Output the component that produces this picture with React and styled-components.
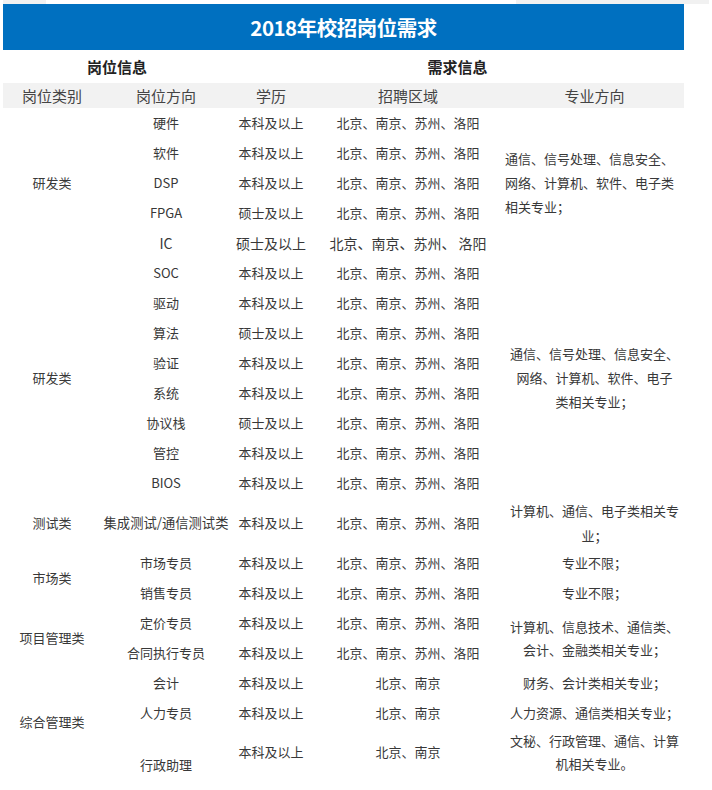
import React from 'react';
import styled, { createGlobalStyle } from 'styled-components';

const GlobalStyle = createGlobalStyle`
  body {
    margin: 0;
    background: #fff;
    font-family: "Noto Sans CJK SC", "Noto Sans", sans-serif;
  }
`;

const Page = styled.div`
  width: 712px;
  min-height: 790px;
  background: #fff;
`;

const TopStrip = styled.div`
  height: 4px;
  margin: 0 3px;
  background: linear-gradient(to right, #f1f1f1 43px, #fff 43px, #fff 513px, #f1f1f1 513px);
`;

const Banner = styled.div`
  margin-left: 3px;
  width: 681px;
  height: 46px;
  background: #0070c0;
  color: #fff;
  display: flex;
  align-items: center;
  justify-content: center;
  font-size: 20.5px;
  font-weight: 700;
  letter-spacing: -0.5px;
`;

const Table = styled.table`
  margin-left: 3px;
  width: 681px;
  table-layout: fixed;
  border-collapse: collapse;
  color: #383838;
`;

const Col = styled.col`
  width: ${p => p.$w}px;
`;

const GroupRow = styled.tr`
  height: 33px;
`;

const GroupCell = styled.td`
  padding: 0;
  text-align: center;
  font-size: 15px;
  font-weight: 700;
  color: #222;
`;

const HeadRow = styled.tr`
  height: 25px;
  background: #f2f2f2;
`;

const HeadCell = styled.th`
  padding: 0;
  font-size: 15px;
  font-weight: 400;
  color: #444;
  text-align: center;
`;

const Row = styled.tr`
  height: ${p => p.$h || 30}px;
`;

const Cell = styled.td`
  padding: 0;
  text-align: ${p => p.$left ? 'left' : 'center'};
  vertical-align: ${p => p.$bottom ? 'bottom' : 'middle'};
  font-size: ${p => p.$size || 13}px;
  line-height: ${p => p.$lh || 24}px;
  white-space: nowrap;
`;

const ALL = '北京、南京、苏州、洛阳';
const BN = '北京、南京';
const BK = '本科及以上';
const SS = '硕士及以上';

const rd1 = [
  ['硬件', BK],
  ['软件', BK],
  ['DSP', BK],
  ['FPGA', SS],
];

const rd2 = [
  ['驱动', BK],
  ['算法', SS],
  ['验证', BK],
  ['系统', BK],
  ['协议栈', SS],
  ['管控', BK],
  ['BIOS', BK],
];

export default function App() {
  return (
    <Page>
      <GlobalStyle />
      <TopStrip />
      <Banner>2018年校招岗位需求</Banner>
      <Table>
        <colgroup>
          <Col $w={98} />
          <Col $w={130} />
          <Col $w={80} />
          <Col $w={194} />
          <Col $w={179} />
        </colgroup>
        <tbody>
          <GroupRow>
            <GroupCell colSpan={2}>岗位信息</GroupCell>
            <GroupCell colSpan={3}>需求信息</GroupCell>
          </GroupRow>
          <HeadRow>
            <HeadCell>岗位类别</HeadCell>
            <HeadCell>岗位方向</HeadCell>
            <HeadCell>学历</HeadCell>
            <HeadCell>招聘区域</HeadCell>
            <HeadCell>专业方向</HeadCell>
          </HeadRow>

          {rd1.map(([dir, deg], i) => (
            <Row key={dir}>
              {i === 0 && <Cell rowSpan={5}>研发类</Cell>}
              <Cell>{dir}</Cell>
              <Cell>{deg}</Cell>
              <Cell>{ALL}</Cell>
              {i === 0 && (
                <Cell rowSpan={5} $left>
                  通信、信号处理、信息安全、<br />网络、计算机、软件、电子类<br />相关专业；
                </Cell>
              )}
            </Row>
          ))}
          <Row>
            <Cell $size={14}>IC</Cell>
            <Cell $size={14}>{SS}</Cell>
            <Cell $size={14}>北京、南京、苏州、 洛阳</Cell>
          </Row>

          <Row>
            <Cell rowSpan={8}>研发类</Cell>
            <Cell>SOC</Cell>
            <Cell>{BK}</Cell>
            <Cell>{ALL}</Cell>
            <Cell rowSpan={8}>
              通信、信号处理、信息安全、<br />网络、计算机、软件、电子<br />类相关专业；
            </Cell>
          </Row>
          {rd2.map(([dir, deg]) => (
            <Row key={dir}>
              <Cell>{dir}</Cell>
              <Cell>{deg}</Cell>
              <Cell>{ALL}</Cell>
            </Row>
          ))}

          <Row $h={50}>
            <Cell>测试类</Cell>
            <Cell $size={13.3}>集成测试/通信测试类</Cell>
            <Cell>{BK}</Cell>
            <Cell>{ALL}</Cell>
            <Cell $lh={25}>计算机、通信、电子类相关专<br />业；</Cell>
          </Row>

          <Row>
            <Cell rowSpan={2}>市场类</Cell>
            <Cell>市场专员</Cell>
            <Cell>{BK}</Cell>
            <Cell>{ALL}</Cell>
            <Cell>专业不限；</Cell>
          </Row>
          <Row>
            <Cell>销售专员</Cell>
            <Cell>{BK}</Cell>
            <Cell>{ALL}</Cell>
            <Cell>专业不限；</Cell>
          </Row>

          <Row>
            <Cell rowSpan={2}>项目管理类</Cell>
            <Cell>定价专员</Cell>
            <Cell>{BK}</Cell>
            <Cell>{ALL}</Cell>
            <Cell rowSpan={2} $lh={23}>
              计算机、信息技术、通信类、<br />会计、金融类相关专业；
            </Cell>
          </Row>
          <Row>
            <Cell>合同执行专员</Cell>
            <Cell>{BK}</Cell>
            <Cell>{ALL}</Cell>
          </Row>

          <Row>
            <Cell rowSpan={3}>综合管理类</Cell>
            <Cell>会计</Cell>
            <Cell>{BK}</Cell>
            <Cell>{BN}</Cell>
            <Cell>财务、会计类相关专业；</Cell>
          </Row>
          <Row>
            <Cell>人力专员</Cell>
            <Cell>{BK}</Cell>
            <Cell>{BN}</Cell>
            <Cell>人力资源、通信类相关专业；</Cell>
          </Row>
          <Row $h={48}>
            <Cell $bottom $lh={22}>行政助理</Cell>
            <Cell>{BK}</Cell>
            <Cell>{BN}</Cell>
            <Cell $lh={23}>文秘、行政管理、通信、计算<br />机相关专业。</Cell>
          </Row>
        </tbody>
      </Table>
    </Page>
  );
}
